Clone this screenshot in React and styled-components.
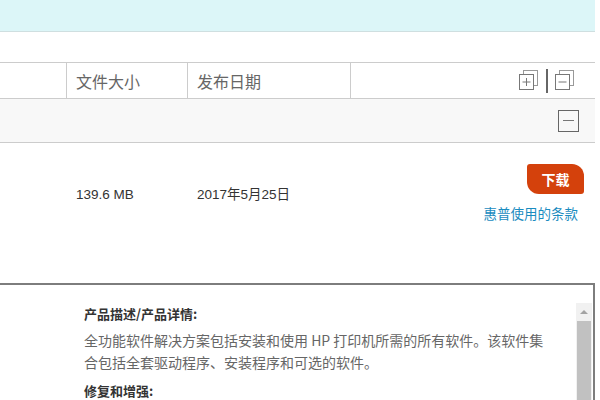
import React from "react";
import styled, { createGlobalStyle } from "styled-components";

const GlobalStyle = createGlobalStyle`
  html, body {
    margin: 0;
    padding: 0;
    overflow: hidden;
    background: #ffffff;
    font-family: "Noto Sans CJK SC", "Liberation Sans", sans-serif;
  }
`;

const ExpandAllIcon = ({ minus }) => (
  <svg width="20" height="22" viewBox="0 0 20 22">
    <rect x="4.5" y="0.5" width="14" height="15" fill="none" stroke="#999" />
    <rect x="0.5" y="4.5" width="14" height="15" fill="#fff" stroke="#777" />
    <line x1="3.5" y1="12" x2="11.5" y2="12" stroke="#777" />
    {!minus && <line x1="7.5" y1="8" x2="7.5" y2="16" stroke="#777" />}
  </svg>
);

const App = () => {
  return (
    <Page>
      <GlobalStyle />
      <TopBand />
      <Spacer />
      <HeaderRow>
        <HeadCell $w={67} />
        <HeadCell $w={121}>文件大小</HeadCell>
        <HeadCell $w={163}>发布日期</HeadCell>
        <ToolCell>
          <ExpandAllIcon />
          <Divider />
          <ExpandAllIcon minus />
        </ToolCell>
      </HeaderRow>
      <GroupRow>
        <CollapseBox />
      </GroupRow>
      <DataRow>
        <DataCell $w={67} />
        <DataCell $w={121}>139.6 MB</DataCell>
        <DataCell $w={163}>2017年5月25日</DataCell>
        <ActionCell>
          <DownloadButton>下载</DownloadButton>
          <TermsLink href="#">惠普使用的条款</TermsLink>
        </ActionCell>
      </DataRow>
      <Dialog>
        <DialogBody>
          <SectionTitle>产品描述/产品详情:</SectionTitle>
          <SectionText>
            全功能软件解决方案包括安装和使用 HP 打印机所需的所有软件。该软件集合包括全套驱动程序、安装程序和可选的软件。
          </SectionText>
          <SectionTitle $gap>修复和增强:</SectionTitle>
        </DialogBody>
        <Scrollbar>
          <ScrollArrow />
          <ScrollThumb />
        </Scrollbar>
      </Dialog>
    </Page>
  );
};

const Page = styled.div`
  width: 595px;
  height: 400px;
  display: flex;
  flex-direction: column;
`;

const TopBand = styled.div`
  height: 31px;
  background: #dcf6f8;
  border-bottom: 1px solid #cfdfe0;
`;

const Spacer = styled.div`
  height: 30px;
`;

const HeaderRow = styled.div`
  display: flex;
  height: 37px;
  box-sizing: border-box;
  border-top: 1px solid #cccccc;
  border-bottom: 1px solid #cccccc;
`;

const HeadCell = styled.div`
  width: ${(p) => p.$w}px;
  box-sizing: border-box;
  border-right: 1px solid #cccccc;
  padding-left: 9px;
  display: flex;
  align-items: center;
  font-size: 16px;
  color: #666666;
`;

const ToolCell = styled.div`
  flex: 1;
  display: flex;
  align-items: center;
  justify-content: flex-end;
  padding-right: 20px;
`;

const Divider = styled.span`
  width: 2px;
  height: 24px;
  background: #666666;
  margin: 0 7px;
`;

const GroupRow = styled.div`
  height: 44px;
  box-sizing: border-box;
  background: #f8f8f8;
  border-bottom: 1px solid #cccccc;
  display: flex;
  align-items: center;
  justify-content: flex-end;
  padding-right: 16px;
`;

const CollapseBox = styled.div`
  width: 21px;
  height: 22px;
  box-sizing: border-box;
  border: 1px solid #666666;
  display: flex;
  align-items: center;
  justify-content: center;
  &::after {
    content: "";
    width: 11px;
    height: 1px;
    background: #777777;
  }
`;

const DataRow = styled.div`
  display: flex;
  height: 140px;
`;

const DataCell = styled.div`
  width: ${(p) => p.$w}px;
  box-sizing: border-box;
  padding: 42px 0 0 9px;
  font-family: "Liberation Sans", "Noto Sans CJK SC", sans-serif;
  font-size: 13.5px;
  line-height: 20px;
  color: #333333;
`;

const ActionCell = styled.div`
  flex: 1;
  display: flex;
  flex-direction: column;
  align-items: flex-end;
  padding: 21px 11px 0 0;
`;

const DownloadButton = styled.button`
  width: 57px;
  height: 30px;
  border: none;
  border-radius: 3px 12px 3px 12px;
  background: #d4410c;
  color: #ffffff;
  font-family: inherit;
  font-size: 14px;
  font-weight: bold;
  padding: 0;
  cursor: pointer;
`;

const TermsLink = styled.a`
  margin: 9px 6px 0 0;
  font-size: 13.5px;
  line-height: 20px;
  color: #1a8cc0;
  text-decoration: none;
`;

const Dialog = styled.div`
  flex: 1;
  display: flex;
  overflow: hidden;
  border-top: 2px solid #7d7d7d;
  border-right: 2px solid #7d7d7d;
`;

const DialogBody = styled.div`
  flex: 1;
  padding: 19px 0 0 84px;
`;

const SectionTitle = styled.div`
  margin-top: ${(p) => (p.$gap ? "8px" : "0")};
  font-size: 13px;
  font-weight: bold;
  line-height: 20px;
  color: #333333;
`;

const SectionText = styled.p`
  width: 468px;
  margin: 5px 0 0;
  font-size: 14px;
  line-height: 22px;
  color: #666666;
`;

const Scrollbar = styled.div`
  width: 16px;
  margin: 18px 1px 0 0;
  display: flex;
  flex-direction: column;
  background: #f1f1f1;
`;

const ScrollArrow = styled.div`
  height: 18px;
  display: flex;
  align-items: center;
  justify-content: center;
  &::after {
    content: "";
    border-left: 4px solid transparent;
    border-right: 4px solid transparent;
    border-bottom: 4px solid #a3a3a3;
  }
`;

const ScrollThumb = styled.div`
  flex: 1;
  margin: 0 1px;
  background: #c1c1c1;
`;

export default App;
